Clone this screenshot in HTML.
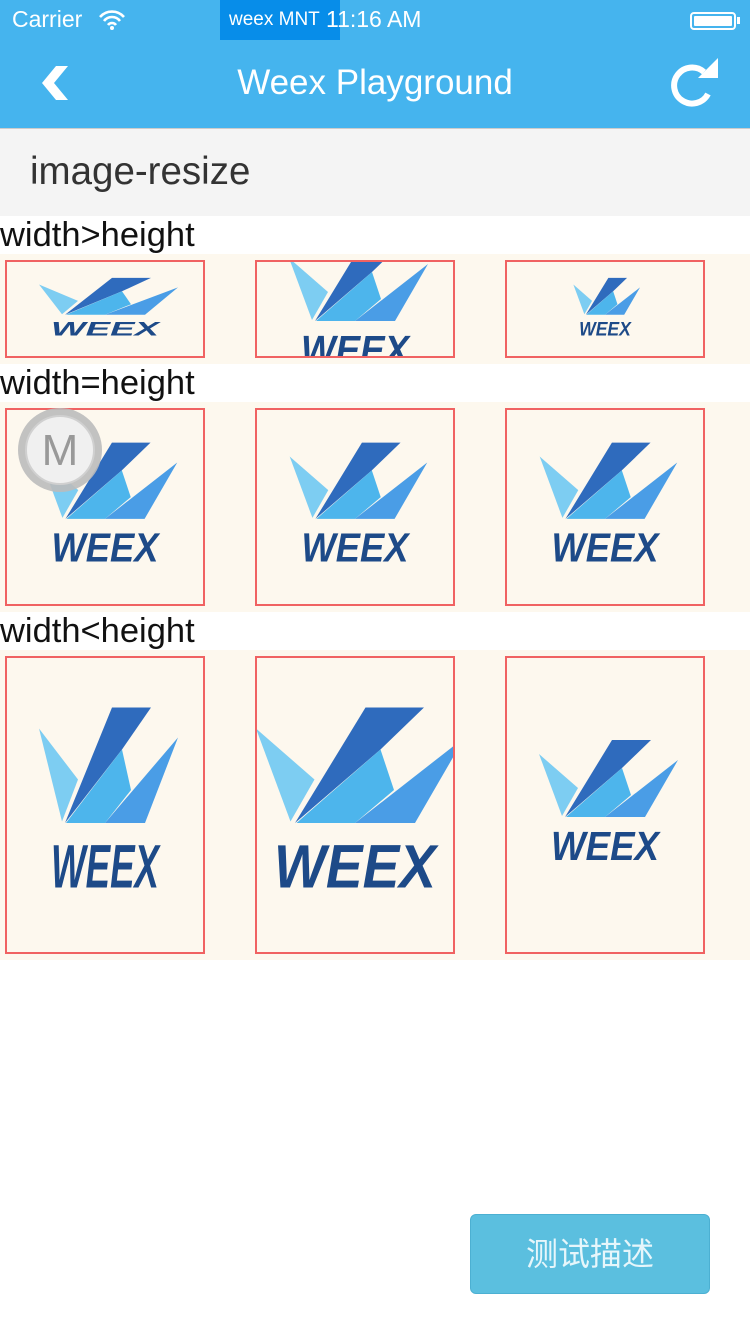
<!DOCTYPE html>
<html><head><meta charset="utf-8"><style>
*{margin:0;padding:0;box-sizing:border-box}
body{width:750px;height:1334px;background:#fff;font-family:"Liberation Sans","Noto Sans CJK SC",sans-serif;position:relative;overflow:hidden}
.abs{position:absolute}
.lbl{position:absolute;left:0;font-size:34.5px;color:#111;height:38px;line-height:38px}
.row{position:absolute;left:0;width:750px;background:#fdf8ee}
.box{position:absolute;border:2px solid #f06262;width:200px;overflow:hidden}
.box svg{width:100%;height:100%;display:block}
</style></head><body>
<svg width="0" height="0" style="position:absolute">
<defs>
<g id="logo">
<polygon points="32,47 71,81 55,109" fill="#7dcdf2"/>
<polygon points="105,33 144,33 115,61 58,110" fill="#2f6bbd"/>
<polygon points="59,110 115,61 124,88 98,110" fill="#4db5ec"/>
<polygon points="98,110 171,53 138,110" fill="#4a9de6"/>
<text x="98" y="153" text-anchor="middle" font-family="Liberation Sans" font-weight="bold" font-style="italic" font-size="41" fill="#1d4a88" textLength="108" lengthAdjust="spacingAndGlyphs">WEEX</text>
</g>
</defs></svg>

<div class="abs" style="left:0;top:0;width:750px;height:128px;background:#45b4ee"></div>
<div class="abs" style="left:220px;top:0;width:120px;height:40px;background:#078de9"></div>
<div class="abs" style="left:12px;top:6px;font-size:23px;color:#fff">Carrier</div>
<svg class="abs" style="left:98px;top:10px" width="28" height="20" viewBox="0 0 28 20"><path d="M2 7 A16 16 0 0 1 26 7 M6 11 A10 10 0 0 1 22 11 M10 15 A5 5 0 0 1 18 15" stroke="#fff" stroke-width="2.6" fill="none"/><circle cx="14" cy="18" r="2" fill="#fff"/></svg>
<div class="abs" style="left:229px;top:9px;font-size:19px;color:#fff">weex MNT</div>
<div class="abs" style="left:326px;top:6px;font-size:23px;color:#fff">11:16 AM</div>
<div class="abs" style="left:690px;top:12px;width:46px;height:18px;border:2px solid #fff;border-radius:4px;padding:2px"><div style="background:#fff;width:100%;height:100%;border-radius:1px"></div></div>
<div class="abs" style="left:737px;top:17px;width:3px;height:7px;background:#fff"></div>
<svg class="abs" style="left:38px;top:64px" width="34" height="38" viewBox="0 0 34 38"><polygon points="18,2 30,2 16,19 30,36 18,36 4,19" fill="#fff"/></svg>
<div class="abs" style="left:0;width:750px;top:63px;text-align:center;font-size:35px;color:#fff">Weex Playground</div>
<svg class="abs" style="left:668px;top:58px" width="52" height="50" viewBox="0 0 52 50"><path d="M36 14 A18 18 0 1 0 40 36" stroke="#fff" stroke-width="6" fill="none"/><polygon points="30,20 50,0 50,20" fill="#fff"/></svg>
<div class="abs" style="left:0;top:128px;width:750px;height:88px;background:#f4f4f4;border-top:1px solid #ccc"></div>
<div class="abs" style="left:30px;top:150px;font-size:38.5px;color:#333">image-resize</div>

<div class="lbl" style="top:216px">width&gt;height</div>
<div class="row" style="top:254px;height:110px"></div>
<div class="box" style="left:5px;top:260px;height:98px"><svg viewBox="0 0 196 196" preserveAspectRatio="none"><use href="#logo"/></svg></div>
<div class="box" style="left:255px;top:260px;height:98px"><svg viewBox="0 0 196 196" preserveAspectRatio="xMidYMid slice"><use href="#logo"/></svg></div>
<div class="box" style="left:505px;top:260px;height:98px"><svg viewBox="0 0 196 196" preserveAspectRatio="xMidYMid meet"><use href="#logo"/></svg></div>

<div class="lbl" style="top:364px">width=height</div>
<div class="row" style="top:402px;height:210px"></div>
<div class="box" style="left:5px;top:408px;height:198px"><svg viewBox="0 0 196 196"><use href="#logo"/></svg></div>
<div class="box" style="left:255px;top:408px;height:198px"><svg viewBox="0 0 196 196"><use href="#logo"/></svg></div>
<div class="box" style="left:505px;top:408px;height:198px"><svg viewBox="0 0 196 196"><use href="#logo"/></svg></div>
<div class="abs" style="left:18px;top:408px;width:84px;height:84px;border-radius:50%;background:#bbb;opacity:.9"></div>
<div class="abs" style="left:25px;top:415px;width:70px;height:70px;border-radius:50%;background:#f0f0f0;border:2px solid #d0d0d0;text-align:center;line-height:68px;font-size:44px;color:#999">M</div>

<div class="lbl" style="top:612px">width&lt;height</div>
<div class="row" style="top:650px;height:310px"></div>
<div class="box" style="left:5px;top:656px;height:298px"><svg viewBox="0 0 196 196" preserveAspectRatio="none"><use href="#logo"/></svg></div>
<div class="box" style="left:255px;top:656px;height:298px"><svg viewBox="0 0 196 196" preserveAspectRatio="xMidYMid slice"><use href="#logo"/></svg></div>
<div class="box" style="left:505px;top:656px;height:298px"><svg viewBox="0 0 196 196" preserveAspectRatio="xMidYMid meet"><use href="#logo"/></svg></div>

<div class="abs" style="left:470px;top:1214px;width:240px;height:80px;background:#5bbfdf;border:1px solid #4cb0d2;border-radius:6px;text-align:center;line-height:78px;font-size:32px;color:#e6f6fb">测试描述</div>
</body></html>
